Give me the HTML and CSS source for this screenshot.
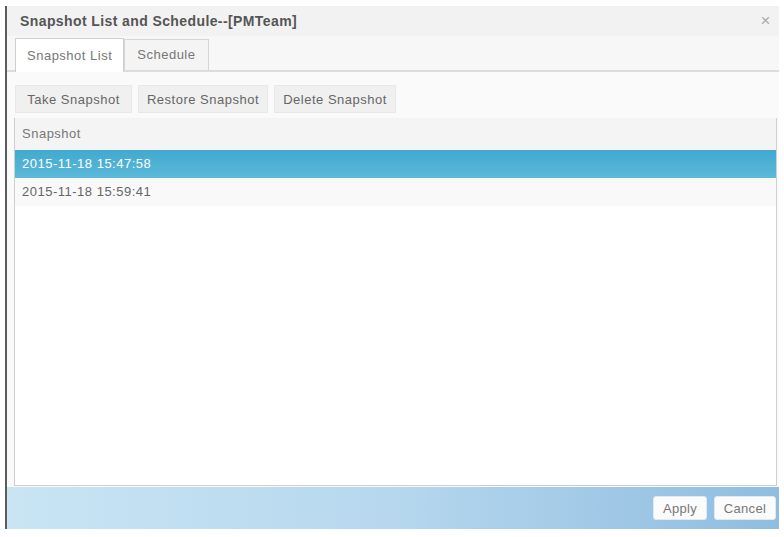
FILE: index.html
```html
<!DOCTYPE html>
<html lang="en">
<head>
  <meta charset="UTF-8" />
  <title>Snapshot List and Schedule</title>
  <link rel="stylesheet" href="styles.css">
</head>
<body>
  <div class="dialog">
    <div class="titlebar">
      <span class="title">Snapshot List and Schedule--[PMTeam]</span>
      <span class="close">&times;</span>
    </div>

    <div class="tabs">
      <div class="tab active">Snapshot List</div>
      <div class="tab">Schedule</div>
    </div>

    <div class="toolbar">
      <button class="tool-btn take">Take Snapshot</button>
      <button class="tool-btn restore">Restore Snapshot</button>
      <button class="tool-btn delete">Delete Snapshot</button>
    </div>

    <div class="grid">
      <div class="grid-header">Snapshot</div>
      <div class="grid-row selected">2015-11-18 15:47:58</div>
      <div class="grid-row">2015-11-18 15:59:41</div>
    </div>

    <div class="footer">
      <button class="foot-btn apply">Apply</button>
      <button class="foot-btn cancel">Cancel</button>
    </div>
  </div>
</body>
</html>
```

FILE: styles.css
```css
body {
  margin: 0;
  background: #ffffff;
  font-family: 'Liberation Sans', Arial, sans-serif;
  font-size: 13px;
  letter-spacing: 0.5px;
  color: #666;
}

.dialog {
  margin: 6px 0 0 5px;
  width: 772px;
  height: 523px;
  border-left: 2px solid #5c5c5c;
  background: #fafafa;
  display: flex;
  flex-direction: column;
}

.titlebar {
  height: 30px;
  display: flex;
  align-items: center;
  justify-content: space-between;
  padding: 0 8px 0 13px;
  background: #f2f2f2;
}

.title {
  font-weight: bold;
  font-size: 14px;
  letter-spacing: 0.4px;
  color: #555;
}

.close {
  font-size: 17px;
  color: #aaa;
}

.tabs {
  height: 34px;
  display: flex;
  align-items: flex-end;
  padding-left: 8px;
  border-bottom: 2px solid #dcdcdc;
  background: #f7f7f7;
}

.tab {
  height: 30px;
  line-height: 30px;
  padding: 0 12px;
  white-space: nowrap;
  border: 1px solid #d6d6d6;
  border-bottom: none;
  background: #f4f4f4;
  color: #777;
}

.tab.active {
  padding: 0 11px;
  height: 33px;
  line-height: 33px;
  margin-bottom: -2px;
  background: #ffffff;
  border-color: #cfcfcf;
}

.toolbar {
  display: flex;
  gap: 6px;
  padding: 13px 0 0 8px;
}

.tool-btn {
  height: 28px;
  padding: 0;
  white-space: nowrap;
  border: 1px solid #e8e8e8;
  background: #f0f0f0;
  font-family: inherit;
  font-size: 13px;
  letter-spacing: 0.5px;
  color: #666;
}

.take { width: 117px; }
.restore { width: 130px; }
.delete { width: 122px; }

.grid {
  flex: 1;
  margin: 5px 2px 0 7px;
  border: 1px solid #cfcfcf;
  border-top: none;
  background: #ffffff;
}

.grid-header {
  height: 32px;
  line-height: 32px;
  padding-left: 7px;
  background: #f4f4f4;
  color: #777;
}

.grid-row {
  height: 28px;
  line-height: 28px;
  padding-left: 7px;
  background: #f9f9f9;
  color: #666;
}

.grid-row.selected {
  background: linear-gradient(#41a9d0, #5cb9d9);
  color: #fff;
}

.footer {
  height: 42px;
  margin-top: 1px;
  display: flex;
  align-items: center;
  justify-content: flex-end;
  gap: 7px;
  padding-right: 3px;
  background: linear-gradient(90deg, #c9e5f4, #b6d7ee 50%, #8fbde0);
}

.foot-btn {
  height: 24px;
  padding: 0;
  border: 1px solid #dfe9f0;
  border-radius: 3px;
  background: #fbfbfb;
  font-family: inherit;
  font-size: 13px;
  letter-spacing: 0.3px;
  color: #777;
}

.apply { width: 54px; }
.cancel { width: 62px; }
```
